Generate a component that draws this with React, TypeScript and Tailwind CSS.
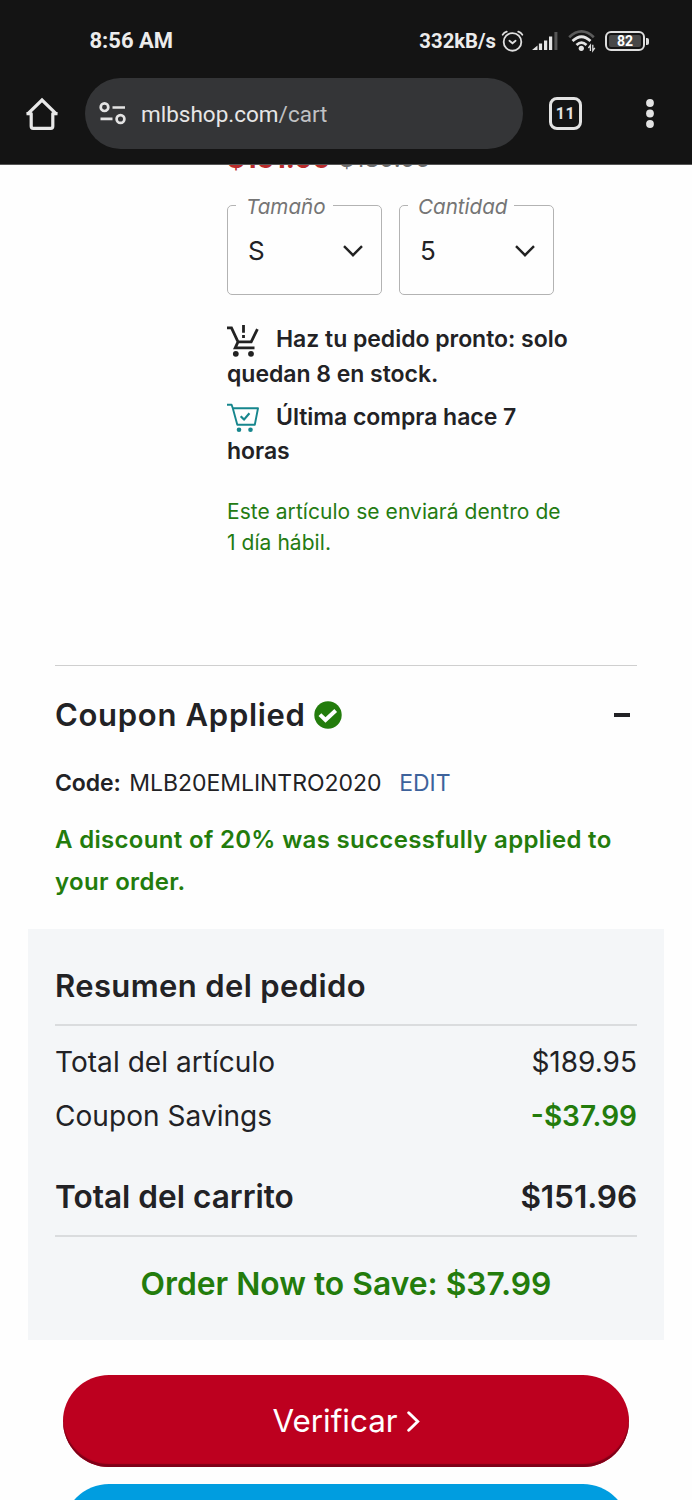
import React from "react";

const inter = "font-['Inter',sans-serif]";
const roboto = "font-['Roboto',sans-serif]";

function StatusBar() {
  return (
    <div className="flex h-[78px] items-start pt-[26px] pl-[89.5px] pr-[43px] text-[#ececec]">
      <span className="text-[22px] font-bold leading-[30px]">8:56 AM</span>
      <div className="ml-auto flex h-[30px] items-center">
        <span className="text-[20.3px] font-bold leading-[30px]">332kB/s</span>
        <svg className="ml-[5px]" width="23" height="24" viewBox="0 0 24 24" fill="none" stroke="#dedede" strokeWidth="1.9" strokeLinecap="round">
          <circle cx="12" cy="13" r="9.2" />
          <path d="M1.8 5.4Q3.2 2.9 6 2.2M22.2 5.4Q20.8 2.9 18 2.2M8.8 11.8L12 14.4L15.2 11.8" />
        </svg>
        <svg className="ml-[8px]" width="26" height="20" viewBox="0 0 26 20">
          <path d="M0 19L5.5 14.5V19ZM6.9 12.5H10.1V19H6.9ZM12 9.5H15.2V19H12ZM17 5.5H20.2V19H17Z" fill="#e4e4e4" />
          <path d="M22.4 1H25.4V19H22.4Z" fill="#555" />
        </svg>
        <svg className="ml-[10px]" width="28" height="24" viewBox="0 0 28 24" fill="none" strokeWidth="2.7">
          <path d="M1.2 8.2Q13.5 -3.3 25.8 8.2" stroke="#5b5b5b" />
          <path d="M4.5 12Q13.5 3.5 22.5 12M8.5 16Q13.5 11.2 18.5 16" stroke="#e4e4e4" />
          <circle cx="13.3" cy="19.3" r="2.6" fill="#e4e4e4" />
          <path d="M22.4 22V16.2L20.4 19M24.8 15.8V21.6L26.8 18.8" stroke="#dedede" strokeWidth="1.3" />
        </svg>
        <div className="ml-[9px] flex h-[20px] w-[40px] items-center justify-center rounded-[6px] border-2 border-[#dedede] p-[2px]">
          <span className="flex h-full w-full items-center justify-center rounded-[2px] bg-[#484848] text-[14px] font-bold leading-none text-white">82</span>
        </div>
        <span className="ml-px h-[7px] w-[3px] rounded-r-[2px] bg-[#dedede]" />
      </div>
    </div>
  );
}

function BrowserBar() {
  return (
    <div className="flex h-[71px] items-center">
      <svg className="ml-[26px] shrink-0" width="32" height="34" viewBox="0 0 32 34" fill="none" stroke="#e8e8e8" strokeWidth="3.2" strokeLinejoin="round">
        <path d="M1.5 17.2L16 3L30.5 17.2" strokeLinejoin="miter" />
        <path d="M0.5 16.6H5.2V29.3Q5.2 31.3 7.2 31.3H24.8Q26.8 31.3 26.8 29.3V16.6H31.5" />
      </svg>
      <div className="ml-[27px] flex h-[71px] w-[438px] items-center rounded-full bg-[#343537]">
        <svg className="ml-[14px] shrink-0" width="27" height="24" viewBox="0 0 27 24" fill="none" stroke="#e3e3e3" strokeWidth="2.7">
          <circle cx="5.5" cy="5.2" r="3.8" />
          <path d="M13.5 5.5H26M1.5 16.8H13.5" />
          <circle cx="21.5" cy="17" r="3.9" />
        </svg>
        <span className="ml-[15px] text-[22.5px] leading-[30px] text-[#e6e6e6]">mlbshop.com<span className="text-[#c0c1c3]">/cart</span></span>
      </div>
      <div className="ml-[26px] flex h-[33px] w-[33px] items-center justify-center rounded-[8px] border-[3.5px] border-[#e3e3e3] text-[16px] font-bold tracking-[0.6px] text-[#e3e3e3]">11</div>
      <svg className="ml-[63px]" width="10" height="32" viewBox="0 0 10 32" fill="#e3e3e3">
        <circle cx="5" cy="5" r="3.9" />
        <circle cx="5" cy="15.5" r="3.9" />
        <circle cx="5" cy="26" r="3.9" />
      </svg>
    </div>
  );
}

function SelectBox({ label, value }: { label: string; value: string }) {
  return (
    <fieldset className="h-[100px] w-[155px] rounded-[5px] border border-[#b3b3b3]">
      <legend className="ml-[8px] h-[20px] pl-[10px] pr-[7px] text-[20.6px] italic leading-[23px] text-[#757575]">{label}</legend>
      <div className="flex items-center justify-between pl-[20px] pr-[18px] pt-[18px]">
        <span className="text-[26px] leading-[36px]">{value}</span>
        <svg width="20" height="12" viewBox="0 0 20 12" fill="none" stroke="#222" strokeWidth="2.4">
          <path d="M1 1.2L10 10.2L19 1.2" />
        </svg>
      </div>
    </fieldset>
  );
}

function Row({ label, value, className }: { label: string; value: string; className?: string }) {
  return (
    <div className="flex items-center justify-between text-[28px] leading-[54px]">
      <span className="tracking-[0.05px]">{label}</span>
      <span className={className}>{value}</span>
    </div>
  );
}

export default function App() {
  return (
    <div className={`flex h-[1500px] w-[692px] flex-col overflow-hidden bg-[#fefefe] text-[#222225] ${inter}`}>
      <header className={`relative z-10 h-[165px] shrink-0 border-b border-[#555] bg-[#141414] ${roboto}`}>
        <StatusBar />
        <BrowserBar />
      </header>

      <section className="flex h-[500px] shrink-0 flex-col pl-[227px]">
        <div className="-mt-[24px] flex h-[36px] shrink-0 items-center gap-[9px] leading-[36px]">
          <span className="text-[27.3px] font-bold text-[#b92b2b]">$151.96</span>
          <span className="text-[24.2px] text-[#6d6d6d]">$189.95</span>
        </div>
        <div className="mt-[18px] flex gap-[17px]">
          <SelectBox label="Tamaño" value="S" />
          <SelectBox label="Cantidad" value="5" />
        </div>
        <div className="mt-[27px] w-[350px] text-[23px] font-semibold leading-[34.5px] tracking-[-0.03px]">
          <p className="h-[77.5px]">
            <svg className="relative top-[2px] mr-[17px] inline-block align-[-8px]" width="32" height="32" viewBox="0 0 32 32" fill="none" stroke="#222" strokeWidth="2.8">
              <path d="M0 2.8H4.5L11 16.8H24.2L30.4 4.2M11 16.8L8.2 22.9H27.5" />
              <path d="M16.5 0V7.8M16.5 10V13" />
              <circle cx="8.8" cy="28.8" r="2.9" fill="#222" stroke="none" />
              <circle cx="24" cy="28.8" r="2.9" fill="#222" stroke="none" />
            </svg>
            Haz tu pedido pronto: solo quedan 8 en stock.
          </p>
          <p>
            <svg className="relative top-px mr-[17px] inline-block align-[-7px]" width="32" height="30" viewBox="0 0 32 30" fill="none" stroke="#16868d" strokeWidth="1.9" strokeLinejoin="round">
              <path d="M0 1.8H4.6L5.8 5.3H31L27.8 21.8H10.3L5.8 5.3" />
              <path d="M13.7 13.2L17 16.6L22.4 10.3" strokeWidth="2.2" />
              <circle cx="12" cy="26.8" r="2.3" fill="#16868d" stroke="none" />
              <circle cx="23.5" cy="26.8" r="2.3" fill="#16868d" stroke="none" />
            </svg>
            Última compra hace 7<br />horas
          </p>
        </div>
        <p className="mt-[27px] text-[21px] leading-[31.5px] tracking-[0.05px] text-[#247b12]">
          Este artículo se enviará dentro de<br />1 día hábil.
        </p>
      </section>

      <section className="mx-[55px] h-[264px] shrink-0 border-t border-[#cfcfcf]">
        <div className="mt-[29px] flex h-[40px] items-center">
          <h2 className="text-[31px] font-semibold leading-[40px] tracking-[0.7px]">Coupon Applied</h2>
          <svg className="ml-[8.5px]" width="28" height="28" viewBox="0 0 28 28">
            <circle cx="14" cy="14" r="13.7" fill="#237c0c" />
            <path d="M5.9 13.6L11.5 19L21.7 9.5" fill="none" stroke="#fff" strokeWidth="4" />
          </svg>
          <span className="ml-auto mr-[7px] h-[4px] w-[16px] bg-[#222225]" />
        </div>
        <div className="mt-[31px] flex h-[34px] items-center text-[23px] leading-[34px]">
          <span className="font-semibold tracking-[-0.1px]">Code:</span>
          <span className="ml-[8.5px] tracking-[-0.04px]">MLB20EMLINTRO2020</span>
          <a className="ml-[18px] tracking-[-0.1px] text-[#3d629b]">EDIT</a>
        </div>
        <p className="mt-[19px] text-[24px] font-semibold leading-[42px] tracking-[0.32px] text-[#237c0c]">
          A discount of 20% was successfully applied to your order.
        </p>
      </section>

      <section className="mx-[28px] h-[411px] shrink-0 bg-[#f4f6f8] px-[27px]">
        <h2 className="h-[97px] border-b-2 border-[#dadcde] pt-[37px] text-[31px] font-semibold leading-[40px] tracking-[0.38px]">Resumen del pedido</h2>
        <div className="pt-[9px]">
          <Row label="Total del artículo" value="$189.95" />
          <Row label="Coupon Savings" value="-$37.99" className="font-semibold text-[#237c0c]" />
        </div>
        <div className="mt-[34px] flex h-[60px] justify-between border-b-2 border-[#dadcde] text-[31.6px] font-semibold leading-[40px]">
          <span>Total del carrito</span>
          <span className="tracking-[-0.1px]">$151.96</span>
        </div>
        <p className="pt-[27px] text-center text-[31.8px] font-semibold leading-[40px] text-[#237c0c]">Order Now to Save: $37.99</p>
      </section>

      <section className="mt-[35px] flex shrink-0 flex-col gap-[17px] px-[63px]">
        <button className="flex h-[92px] shrink-0 items-center justify-center rounded-full bg-[#bd001f] text-[31.4px] text-white shadow-[inset_0_-3px_1px_#7f0018]">
          <span className="pt-[2px]">Verificar</span>
          <svg className="ml-[9px] mt-px" width="13" height="21" viewBox="0 0 13 21" fill="none" stroke="#fff" strokeWidth="2.9" strokeLinecap="round">
            <path d="M1.7 1.8L10.7 10.5L1.7 19.2" />
          </svg>
        </button>
        <div className="h-[92px] shrink-0 rounded-full bg-[#009de0]" />
      </section>
    </div>
  );
}
